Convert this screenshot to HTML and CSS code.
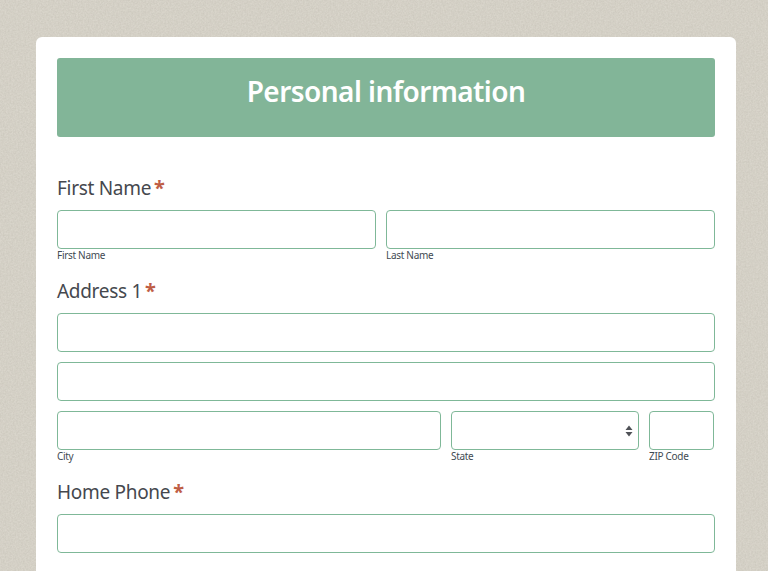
FILE: index.html
```html
<!DOCTYPE html>
<html lang="en">
<head>
<meta charset="UTF-8" />
<meta name="viewport" content="width=device-width, initial-scale=1" />
<title>Personal information</title>
<link rel="stylesheet" href="styles.css">
</head>
<body>
  <!-- paper grain behind the card -->
  <svg class="grain" aria-hidden="true">
    <filter id="paper">
      <feTurbulence type="fractalNoise" baseFrequency="0.6" numOctaves="4" seed="4" />
      <feColorMatrix type="matrix" values="0 0 0 0 0.40  0 0 0 0 0.38  0 0 0 0 0.32  0.4 0 0 0 -0.1" />
    </filter>
    <rect width="100%" height="100%" filter="url(#paper)" />
  </svg>

  <form class="card">
    <h1 class="banner">Personal information</h1>

    <div class="field">
      <div class="label">First Name<span class="req">*</span></div>
      <div class="row row-name">
        <div>
          <input class="input" type="text">
          <div class="sub">First Name</div>
        </div>
        <div>
          <input class="input" type="text">
          <div class="sub">Last Name</div>
        </div>
      </div>
    </div>

    <div class="field">
      <div class="label">Address 1<span class="req">*</span></div>
      <div class="stack">
        <input class="input" type="text">
        <input class="input" type="text">
        <div class="row row-city">
          <div>
            <input class="input" type="text">
            <div class="sub">City</div>
          </div>
          <div>
            <div class="select-wrap">
              <select class="input select"><option></option></select>
              <svg class="select-arrows" width="8" height="12" viewBox="0 0 8 12" aria-hidden="true">
                <path d="M4 0.5 L7.5 5 H0.5 Z M0.5 7 H7.5 L4 11.5 Z" />
              </svg>
            </div>
            <div class="sub">State</div>
          </div>
          <div>
            <input class="input" type="text">
            <div class="sub">ZIP Code</div>
          </div>
        </div>
      </div>
    </div>

    <div class="field">
      <div class="label">Home Phone<span class="req">*</span></div>
      <input class="input" type="text">
    </div>
  </form>
</body>
</html>
```

FILE: styles.css
```css
html, body {
  height: 100%;
}
body {
  margin: 0;
  background-color: #d9d5cb;
  font-family: "Noto Sans", "Open Sans", sans-serif;
  color: #45484e;
  overflow: hidden;
}
.grain {
  position: fixed;
  top: 0;
  left: 0;
  width: 100%;
  height: 100%;
}
.card {
  position: relative;
  box-sizing: border-box;
  width: 700px;
  margin: 37px 0 0 36px;
  padding: 21px 21px 40px;
  background: #fff;
  border-radius: 6px;
}
.banner {
  box-sizing: border-box;
  height: 79px;
  margin: 0 0 39px;
  padding-top: 13px;
  background: #82b598;
  border-radius: 3px;
  color: #fff;
  font-size: 28px;
  font-weight: 600;
  letter-spacing: -0.55px;
  line-height: 40px;
  text-align: center;
}
.field {
  margin-bottom: 18px;
}
.label {
  margin-bottom: 10px;
  font-size: 19px;
  letter-spacing: -0.3px;
  line-height: 24px;
}
.req {
  margin-left: 3px;
  color: #bf5d45;
  font-size: 20px;
  font-weight: 700;
  letter-spacing: 0;
  line-height: 20px;
}
.stack {
  display: flex;
  flex-direction: column;
  gap: 10px;
}
.row {
  display: grid;
  column-gap: 10px;
}
.row-name {
  grid-template-columns: 319px 329px;
}
.row-city {
  grid-template-columns: 384px 188px 65px;
}
.input {
  display: block;
  box-sizing: border-box;
  width: 100%;
  height: 39px;
  padding: 0 8px;
  background: #fff;
  border: 1px solid #7fb898;
  border-radius: 4px;
  outline: none;
  font: inherit;
}
.select {
  appearance: none;
}
.select-wrap {
  position: relative;
}
.select-arrows {
  position: absolute;
  top: 14px;
  right: 6px;
  fill: #4f5257;
}
.sub {
  color: #3f4a52;
  font-size: 10px;
  letter-spacing: -0.3px;
  line-height: 12px;
}
```
